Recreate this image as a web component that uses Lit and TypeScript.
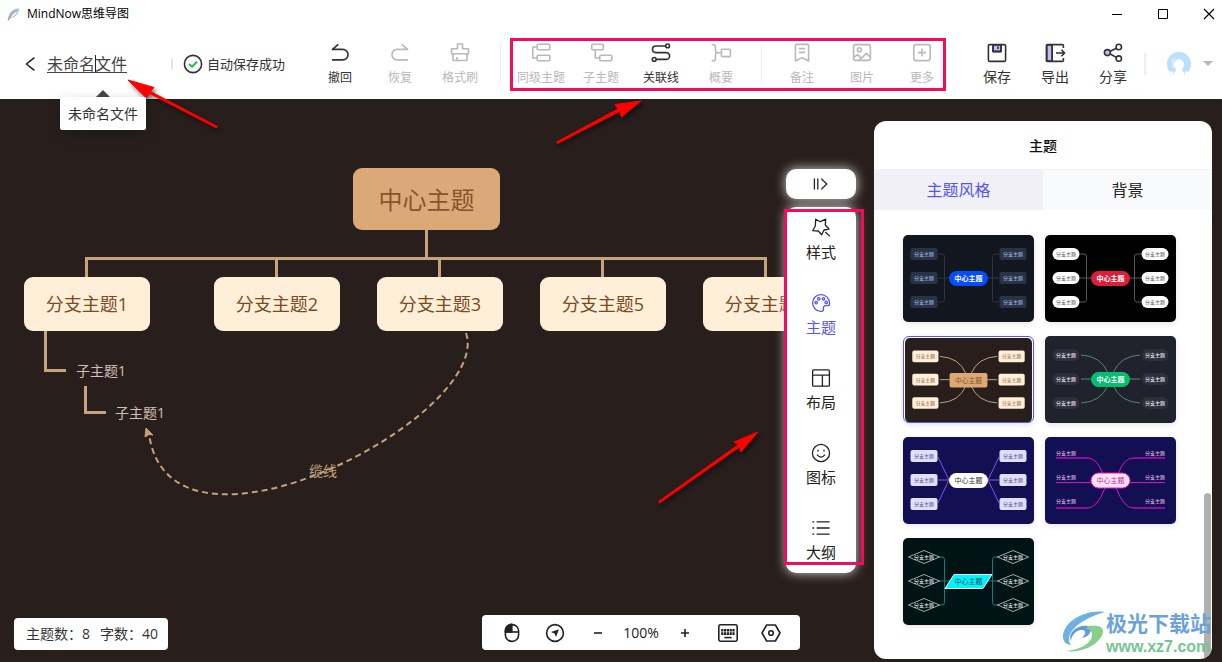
import { LitElement, html, css, svg, nothing } from "lit";
import { customElement, property, state } from "lit/decorators.js";
import { classMap } from "lit/directives/class-map.js";

const icons: Record<string, unknown> = {
  undo: svg`<path d="M8.3 1.4 2.4 6.4H12.8a5.2 5.2 0 0 1 0 10.5H2"/>`,
  redo: svg`<path d="M11.7 1.4 17.6 6.4H7.2a5.2 5.2 0 0 0 0 10.5H18"/>`,
  brush: svg`<path d="M7.5 5.7V1h5v4.7h5.9v5H1.6v-5zM3 10.7v6.8h14v-6.8M7 14v3.5"/>`,
  sibling: svg`<rect x="6.2" y="1.2" width="12.6" height="5.6" rx="1"/><rect x="6.2" y="12.2" width="12.6" height="5.6" rx="1"/><path d="M6.2 4H1.8v11h4.4"/>`,
  child: svg`<rect x=".8" y="1.2" width="11.6" height="5.6" rx="1"/><rect x="8.8" y="12.2" width="12" height="5.6" rx="1"/><path d="M4.2 6.8V15h4.6"/>`,
  relation: svg`<circle cx="16.6" cy="2.9" r="1.9"/><circle cx="3.2" cy="16.4" r="1.9"/><path d="M14.6 3H4.8a3.3 3.3 0 0 0 0 6.6H15.2a3.4 3.4 0 0 1 0 6.8H5.2"/>`,
  summary: svg`<path d="M.6 1.8h1.8q2 0 2 2v3.6q0 2 2 2.4-2 .4-2 2.4v3.6q0 2-2 2H.6M6.4 9.8H10"/><rect x="10.4" y="6.2" width="9" height="7.4" rx="1"/>`,
  note: svg`<path d="M3.4 2.4q0-1 1-1h11.2q1 0 1 1V18L10 14.6 3.4 18zM6.8 5.6h6.4M6.8 9.4h6.4"/>`,
  picture: svg`<rect x="1.6" y="1.6" width="16.8" height="15.8" rx="1.6"/><circle cx="7.4" cy="6.8" r="2"/><path d="m1.8 14.4 3.8-2.8 3.8 3.8 5-5 4 3.8M9.4 15.4l-2 2"/>`,
  more: svg`<rect x="1.8" y="1.6" width="16.4" height="16" rx="2"/><path d="M10 5.6v8M6 9.6h8"/>`,
  save: svg`<rect x="6" y="2" width="8" height="6.4" fill="#bdbdfa"/><rect x="1.4" y="1.6" width="17.2" height="16.8" rx="1.4"/><path d="M6 1.8v6.8h8V1.8M11 3.6v2.4"/>`,
  export: svg`<rect x="1.8" y="2" width="5.4" height="16" fill="#bdbdfa"/><path d="M18.4 5V2.6q0-1-1-1h-15q-1 0-1 1v14.8q0 1 1 1h15q1 0 1-1V15M7.2 1.6v16.8M11 10h8.6M16.4 6.8l3.2 3.2-3.2 3.2"/>`,
  share: svg`<circle cx="4.4" cy="9.6" r="3" fill="#bdbdfa"/><circle cx="15.8" cy="4" r="2.7"/><circle cx="15.8" cy="15.6" r="2.7"/><path d="m7.2 8.2 6.2-3M7.2 11l6.2 3.4"/>`,
  style: svg`<path d="M4.7 1.2 9.300 3.700l5.400-2.500-.4 5.800 3.700 4-5 1-2.300 4.800-3.400-3.800-5.600-.3L4.300 8zM14.300 14l4.600 4.400"/>`,
  theme: svg`<path d="M18.600 10.400c0-5-3.800-8.800-8.600-8.800S1.600 5.300 1.600 10c0 4.400 3.300 8.300 8 8.300H11c1.400-.3 1.600-1.300 1.400-2.800-.2-2 .8-2.900 2.600-2.900h1.600c1.300 0 2-.8 2-2.200z"/><circle cx="5.200" cy="9.600" r="1.200"/><circle cx="7.800" cy="5.800" r="1.200"/><circle cx="12.400" cy="5.800" r="1.200"/><circle cx="15.200" cy="9.400" r="1.200"/>`,
  layout: svg`<rect x="1.600" y="1.800" width="16.800" height="16.400" rx="1"/><path d="M1.600 7.200h16.800M11.400 7.200v11"/>`,
  smile: svg`<circle cx="10" cy="10" r="8.600"/><path d="M6 11.600q4 5 8 0M7 6.800v1.600M13 6.800v1.600"/>`,
  outline: svg`<path d="M5.600 3.800h13M5.600 10h13M5.600 16.200h13M1.400 3.800h1.800M1.400 10h1.800M1.400 16.200h1.800"/>`,
  collapse: svg`<path d="M3.400 4.400v11.200M6.800 4.400v11.200M10.200 4.600l5.600 5.400-5.600 5.400"/>`,
  mouse: svg`<path d="M3.400 9V7.400a6.400 6 0 0 1 6.400-6V9z" fill="currentColor"/><rect x="3.400" y="1.600" width="13.200" height="16.800" rx="6.400"/><path d="M3.400 9h13.200"/>`,
  locate: svg`<circle cx="10" cy="10" r="8.400"/><path d="m14 6.200-3 7.800-1.400-3.600L6 9z" fill="currentColor" stroke="none"/>`,
  minus: svg`<path d="M6 10h8"/>`,
  plus: svg`<path d="M6 10h8M10 6v8"/>`,
  keyboard: svg`<rect x=".8" y="1.800" width="18.400" height="16.400" rx="1.600"/><path d="M3.200 7.200h13.600M3.200 10.600h13.600" stroke-width="2.600" stroke-dasharray="2.200 .6"/><path d="M6.400 14.600h7.200"/>`,
  hexagon: svg`<path d="M5.600 2h8.800l4.600 8-4.600 8H5.600L1 10z"/><circle cx="10" cy="10" r="2.300"/>`,
  check: svg`<circle cx="10" cy="10" r="8.600"/><path d="m6 10 3 2.800 5-5" stroke="#1fbf4c" stroke-width="2"/>`,
  back: svg`<path d="M14.400 3.600 6.400 10l8 6.400"/>`,
  min: svg`<path d="M5 10.500h10" stroke-width="1"/>`,
  max: svg`<path d="M5.500 5.500h9v9h-9z" stroke-width="1"/>`,
  close: svg`<path d="m5 5 10 10M15 5 5 15" stroke-width="1.200"/>`,
};

@customElement("mn-icon")
export class MnIcon extends LitElement {
  @property() name = "";
  static styles = css`
    :host { display: block; width: 20px; height: 20px; }
    .glyph { display: block; width: 100%; height: 100%; overflow: visible; stroke-width: var(--icon-weight, 1.6); }
  `;
  render() {
    return html`<svg class="glyph" viewBox="0 0 20 20" fill="none" stroke="currentColor"
      stroke-linejoin="round" aria-hidden="true">${icons[this.name]}</svg>`;
  }
}

interface Theme {
  id: string;
  bg: string;
  line: string;
  link: "bracket" | "curve" | "straight" | "rail";
  shape: "box" | "pill" | "diamond" | "underline";
  node: string;
  ink: string;
  core: string;
  coreInk: string;
  bold?: boolean;
}

const themes: Theme[] = [
  { id: "星夜", bg: "#12171f", line: "#2d3545", link: "bracket", shape: "box", node: "#2a3346", ink: "#a9c2ea", core: "#0a4cf5", coreInk: "#fff", bold: true },
  { id: "黑红", bg: "#000", line: "#58595c", link: "bracket", shape: "pill", node: "#fff", ink: "#555", core: "#da2038", coreInk: "#fff", bold: true },
  { id: "暖棕", bg: "#281f1d", line: "#c4a37d", link: "curve", shape: "box", node: "#ffeed8", ink: "#8a623f", core: "#dba977", coreInk: "#8a522c" },
  { id: "墨绿", bg: "#20222c", line: "#4f8a70", link: "curve", shape: "pill", node: "#2e303d", ink: "#fff", core: "#07bd70", coreInk: "#fff", bold: true },
  { id: "靛紫", bg: "#121052", line: "#7358e8", link: "straight", shape: "box", node: "#e0deff", ink: "#55507e", core: "#fff", coreInk: "#33333d" },
  { id: "霓虹", bg: "#121052", line: "#d80fc0", link: "rail", shape: "underline", node: "#8d0f9a", ink: "#f6c6f3", core: "#fbe4f8", coreInk: "#c22ba8" },
  { id: "青光", bg: "#001415", line: "#0b8084", link: "bracket", shape: "diamond", node: "#c8d0d0", ink: "#fff", core: "#00f2fa", coreInk: "#0b5457" },
];

const rows = [19, 43, 67];

@customElement("theme-preview")
export class ThemePreview extends LitElement {
  @property({ attribute: false }) theme!: Theme;
  static styles = css`
    :host { display: block; }
    .map { display: block; width: 100%; }
    text { font-family: "Noto Sans CJK SC", sans-serif; text-anchor: middle; }
    .leaf { font-size: 5px; }
    .core { font-size: 7px; }
    .core.bold { font-weight: 700; }
  `;

  private links(t: Theme) {
    const paths = {
      bracket: "M35 19h4q2.500 0 2.500 2.500v43q0 2.500-2.500 2.500h-4M35 43h61M96 19h-4q-2.500 0-2.500 2.500v43q0 2.500 2.500 2.500h4",
      curve: "M36 19q20 1 27 18M36 67q20-1 27-18M95 19q-20 1-27 18M95 67q-20-1-27-18M36 43h59",
      straight: "M35 20 46 43 35 66M96 20 85 43l11 23M35 43h61",
      rail: "M43 21q9 0 15 16M88 21q-9 0-15 16M43 71q9 0 17-20M88 71q-9 0-17-20M11 45.500h109",
    };
    return svg`<path d=${paths[t.link]} fill="none" stroke=${t.line} />`;
  }

  private leaf(t: Theme, x: number, y: number) {
    const shape = {
      box: svg`<rect x=${x - 13.5} y=${y - 6} width="27" height="12" rx="2" fill=${t.node} />`,
      pill: svg`<rect x=${x - 13.5} y=${y - 6} width="27" height="12" rx="6" fill=${t.node} />`,
      diamond: svg`<path d="M${x - 15.5} ${y}L${x} ${y - 6.5}L${x + 15.5} ${y}L${x} ${y + 6.5}Z" fill=${t.bg} stroke=${t.node} stroke-width=".8" />`,
      underline: y === 43 ? nothing : svg`<path d="M${x < 60 ? 11 : 88} ${y === 19 ? 21 : 71}h32" stroke=${t.node} stroke-width="2" />`,
    }[t.shape];
    const lift = t.shape === "underline" ? 1 : -2;
    return svg`${shape}<text class="leaf" x=${x} y=${y - lift} fill=${t.ink}>分支主题</text>`;
  }

  private core(t: Theme) {
    if (t.shape === "diamond")
      return svg`<path d="M51 36.500h38L80 50.500H42z" fill=${t.core} stroke="#dff" />`;
    const radius = t.id === "暖棕" ? 2 : 7.5;
    return svg`<rect x="46" y="36" width="39" height="15" rx=${radius} fill=${t.core}
      stroke=${t.shape === "underline" ? "#f20fcb" : "none"} />`;
  }

  render() {
    const t = this.theme;
    return html`<svg class="map" viewBox="0 0 131 87" role="img" aria-label=${t.id}>
      <rect width="131" height="87" rx="5" fill=${t.bg}></rect>
      ${this.links(t)}
      ${rows.map((y) => [this.leaf(t, 21, y), this.leaf(t, 110, y)])}
      ${this.core(t)}
      <text class=${t.bold ? "core bold" : "core"} x="65.500" y="46" fill=${t.coreInk}>中心主题</text>
    </svg>`;
  }
}

interface Tool { icon: string; label: string; off?: boolean }

const toolGroups: Tool[][] = [
  [{ icon: "undo", label: "撤回" }, { icon: "redo", label: "恢复", off: true }, { icon: "brush", label: "格式刷", off: true }],
  [
    { icon: "sibling", label: "同级主题", off: true }, { icon: "child", label: "子主题", off: true },
    { icon: "relation", label: "关联线" }, { icon: "summary", label: "概要", off: true },
  ],
  [{ icon: "note", label: "备注", off: true }, { icon: "picture", label: "图片", off: true }, { icon: "more", label: "更多", off: true }],
];

const fileActions: Tool[] = [
  { icon: "save", label: "保存" }, { icon: "export", label: "导出" }, { icon: "share", label: "分享" },
];

const railItems: Tool[] = [
  { icon: "style", label: "样式" }, { icon: "theme", label: "主题" }, { icon: "layout", label: "布局" },
  { icon: "smile", label: "图标" }, { icon: "outline", label: "大纲" },
];

const nodes = [
  { text: "中心主题", kind: "root", x: 353, y: 69 },
  { text: "分支主题1", kind: "branch", x: 24, y: 178 },
  { text: "分支主题2", kind: "branch", x: 214, y: 178 },
  { text: "分支主题3", kind: "branch", x: 377, y: 178 },
  { text: "分支主题5", kind: "branch", x: 540, y: 178 },
  { text: "分支主题4", kind: "branch", x: 703, y: 178 },
  { text: "子主题1", kind: "leaf", x: 76, y: 262 },
  { text: "子主题1", kind: "leaf", x: 115, y: 304 },
  { text: "缆线", kind: "cable", x: 309, y: 361 },
];

@customElement("app-root")
export class AppRoot extends LitElement {
  @state() private selected = "暖棕";
  @state() private section = "主题";

  static styles = css`
    :host {
      display: flex; flex-direction: column; position: relative; min-height: 100vh;
      overflow: hidden; background: #fff; color: #222;
      font-family: "Noto Sans CJK SC", sans-serif; font-size: 14px; line-height: 20px;
    }
    * { box-sizing: border-box; }
    button { border: 0; padding: 0; background: none; color: inherit; font: inherit; cursor: pointer; }
    .titlebar { display: flex; align-items: center; height: 28px; padding-left: 7px; font-size: 12px; color: #000; }
    .brand { display: flex; align-items: center; gap: 7px; font-family: "Open Sans", "Noto Sans CJK SC", sans-serif; }
    .feather { display: block; width: 13px; height: 13px; }
    .controls { display: flex; gap: 20px; margin-left: auto; }
    .control { display: flex; justify-content: center; width: 26px; }
    .toolbar { display: flex; align-items: center; height: 71px; }
    .file { display: flex; align-items: center; flex: 0 0 310px; padding-left: 20px; }
    .back { width: 20px; margin-right: 7px; }
    .name { position: relative; }
    .field {
      display: block; width: 80px; height: 18px; border: 0; border-bottom: 1px solid #444; padding: 0;
      background: none; color: #444; font: inherit; font-size: 16px; line-height: 16px; outline: 0;
    }
    .caret { position: absolute; left: 48px; top: 0; width: 1px; height: 17px; background: #222; }
    .tip {
      position: absolute; z-index: 3; top: 42px; left: 13px; padding: 6px 8px 7px; border-radius: 2px;
      background: #fff; color: #333; white-space: nowrap; box-shadow: 0 4px 14px rgba(0, 0, 0, 0.2);
    }
    .tip::before {
      content: ""; position: absolute; left: 36px; top: -7px;
      border: 7px solid transparent; border-top: 0; border-bottom-color: #444;
    }
    .saved {
      display: flex; align-items: center; gap: 4px; margin-left: 44px; padding-left: 12px;
      font-size: 13px; color: #333; white-space: nowrap; position: relative;
    }
    .saved::before { content: ""; position: absolute; left: 0; width: 2px; height: 12px; background: #e7e7f3; }
    .tools, .group { display: flex; align-items: center; }
    .group + .group::before { content: ""; width: 1px; height: 40px; margin: 0 10px; background: #eee; }
    .tool { display: flex; flex-direction: column; align-items: center; gap: 6px; width: 60px; font-size: 12px; line-height: 16px; color: #333; }
    .tool:disabled { color: #b9b9b9; cursor: default; }
    .actions { display: flex; align-items: center; margin-left: auto; padding-right: 9px; }
    .action { width: 58px; gap: 5px; font-size: 14px; }
    .rule { width: 2px; height: 22px; margin-left: 2px; background: #eceef0; }
    .user { display: flex; align-items: center; gap: 12px; margin-left: 21px; }
    .avatar { display: block; width: 24px; height: 24px; }
    .drop { border: 5px solid transparent; border-top-color: #b8b8b8; border-bottom: 0; }

    .workspace { position: relative; display: flex; flex: 1; background: #281f1d; }
    .board { position: absolute; inset: 0; overflow: hidden; }
    .wires { position: absolute; left: 0; top: 0; overflow: visible; }
    .node { position: absolute; display: flex; align-items: center; justify-content: center; white-space: nowrap; }
    .root { width: 147px; height: 62px; border-radius: 9px; background: #dba977; color: #8a522c; font-size: 24px; }
    .branch { width: 126px; height: 54px; border-radius: 9px; background: #ffeed8; color: #7a4a20; font-size: 18px; }
    .leaf { color: #d3c0b4; }
    .cable { color: #c4a37d; }
    .branch, .leaf { font-family: "Open Sans", "Noto Sans CJK SC", sans-serif; }

    .stage { position: relative; display: flex; flex: 1; flex-direction: column; justify-content: space-between; min-width: 0; }
    .side { display: flex; flex-direction: column; gap: 8px; width: 70px; margin: 70px 0 0 auto; --icon-weight: 1.3; }
    .side > * { border-radius: 10px; background: #fff; box-shadow: 0 0 12px rgba(255, 255, 255, 0.8); }
    .fold { display: flex; align-items: center; justify-content: center; height: 30px; }
    .rail { display: flex; flex-direction: column; align-items: center; gap: 31px; padding: 11px 0; }
    .item { display: flex; flex-direction: column; align-items: center; gap: 4px; width: 100%; font-size: 15px; }
    .item.on { color: #5656f2; }
    .dock { display: flex; align-items: flex-end; justify-content: space-between; padding: 0 56px 12px 14px; }
    .bar { display: flex; align-items: center; border-radius: 4px; background: #fff; }
    .stats { gap: 10px; height: 32px; padding: 0 10px 0 12px; color: #333; }
    .stats, .zoom { font-family: "Open Sans", "Noto Sans CJK SC", sans-serif; }
    .zoom { height: 35px; padding: 0 8px; }
    .knob { display: flex; justify-content: center; width: 43px; color: #222; }
    .level { width: 44px; text-align: center; }

    .panel {
      position: relative; display: flex; flex-direction: column; flex: 0 0 338px; margin: 22px 10px 3px 18px;
      border-radius: 12px; overflow: hidden; background: #fff;
    }
    .heading { margin: 0; padding: 14px 0; font-size: 14px; font-weight: 500; text-align: center; color: #111; }
    .tabs { display: grid; grid-template-columns: 1fr 1fr; border-top: 1px solid #f0f1f4; }
    .tab { height: 40px; padding-bottom: 2px; background: #f9fafc; font-size: 16px; }
    .tab.on { background: #f0f0f6; color: #5656f2; }
    .themes { display: grid; grid-template-columns: 131px 131px; gap: 14px 11px; padding: 25px 29px; }
    .card { display: block; height: 87px; border-radius: 6px; box-shadow: 0 2px 6px rgba(0, 0, 0, 0.1); }
    .card.on { padding: 1px; border: 1px solid #5656f2; }
    .thumb { position: absolute; right: 1px; bottom: 0; width: 7px; height: 166px; border-radius: 4px 4px 0 0; background: #b0b0b0; }

    .marks { position: absolute; inset: 0; width: 100%; height: 100%; pointer-events: none; }
    .arrow { fill: #f00; stroke: #f00; filter: drop-shadow(2px 3px 2px rgba(0, 0, 0, 0.55)); }
    .frame { fill: none; stroke: #f50a5c; stroke-width: 3; }
    .site { position: absolute; right: 11px; bottom: 6px; display: flex; align-items: center; gap: 1px; pointer-events: none; }
    .swirl { display: block; width: 43px; height: 42px; }
    .words { display: flex; flex-direction: column; white-space: nowrap; }
    .cn { font-size: 21px; font-weight: 700; line-height: 31px; color: #6aa3dc; }
    .url { font-family: "Liberation Sans", sans-serif; font-size: 16px; font-weight: 700; line-height: 18px; color: #74c68f; }
  `;

  private tool(t: Tool, extra = "") {
    return html`<button class="tool ${extra}" ?disabled=${t.off}><mn-icon name=${t.icon}></mn-icon>${t.label}</button>`;
  }

  private knob(icon: string, label: string) {
    return html`<button class="knob" aria-label=${label}><mn-icon name=${icon}></mn-icon></button>`;
  }

  private wires() {
    return html`<svg class="wires" width="856" height="563" fill="none" stroke="#c4a37d" aria-hidden="true">
      <path stroke-width="3" d="M426.500 131v28M86.500 178v-18.500h679V178M276.500 159v19M439.500 159v19M602.500 159v19M45.500 232v39.500H66M85.500 287v26.500H106"/>
      <path stroke-width="2" stroke-dasharray="6 4" d="M466 234C494 316 170 486 149 335"/>
      <path d="m146 329-1 9 4-2.500 4 .5z" fill="#c4a37d"/>
    </svg>`;
  }

  render() {
    return html`
      <header class="titlebar">
        <div class="brand">
          <svg class="feather" viewBox="0 0 13 13" aria-hidden="true">
            <path d="M1 12C1 6 5 1 12 .6 11.600 5 9 9 4 10" fill="#7cc4fb"/>
            <path d="M3.500 9.500C5 6 7 3.500 10.500 2 10 5.500 7.500 8.500 3.500 9.500" fill="#fff3ea"/>
            <path d="M1 12.500C3 8 6 4.500 10 3" fill="none" stroke="#fa8a4f" stroke-width="1.200"/>
          </svg>
          <span>MindNow思维导图</span>
        </div>
        <div class="controls">
          <button class="control" aria-label="最小化"><mn-icon name="min"></mn-icon></button>
          <button class="control" aria-label="最大化"><mn-icon name="max"></mn-icon></button>
          <button class="control" aria-label="关闭"><mn-icon name="close"></mn-icon></button>
        </div>
      </header>

      <div class="toolbar">
        <div class="file">
          <button class="back" aria-label="返回"><mn-icon name="back"></mn-icon></button>
          <div class="name">
            <input class="field" aria-label="文件名" .value=${"未命名文件"} />
            <span class="caret"></span>
            <div class="tip" role="tooltip">未命名文件</div>
          </div>
          <div class="saved"><mn-icon name="check"></mn-icon>自动保存成功</div>
        </div>
        <nav class="tools">
          ${toolGroups.map((g) => html`<div class="group">${g.map((t) => this.tool(t))}</div>`)}
        </nav>
        <div class="actions">
          ${fileActions.map((t) => this.tool(t, "action"))}
          <span class="rule"></span>
          <button class="user" aria-label="账户">
            <svg class="avatar" viewBox="0 0 24 24" aria-hidden="true">
              <circle cx="12" cy="12" r="12" fill="#b9e0ff"/>
              <path d="M6 24c0-4 3-4 3-7-3-2-3-9 3-10 6 1 6 8 3 10 0 3 3 3 3 7z" fill="#fff"/>
              <path d="M0 18q3 3 6 1v5H0zM24 18q-3 3-6 1v5h6z" fill="#fff"/>
              <path d="M5 8q2-3 5-2-3 1-3 5v6q-3-2-2-9" fill="#d8eeff"/>
            </svg>
            <span class="drop"></span>
          </button>
        </div>
      </div>

      <main class="workspace">
        <div class="board">
          ${this.wires()}
          ${nodes.map((n) => html`<div class="node ${n.kind}" style="left:${n.x}px;top:${n.y}px">${n.text}</div>`)}
        </div>
        <div class="stage">
          <div class="side">
            <button class="fold" aria-label="收起"><mn-icon name="collapse"></mn-icon></button>
            <nav class="rail">
              ${railItems.map((r) => html`<button class=${classMap({ item: true, on: r.label === this.section })}
                @click=${() => (this.section = r.label)}><mn-icon name=${r.icon}></mn-icon>${r.label}</button>`)}
            </nav>
          </div>
          <div class="dock">
            <div class="bar stats"><span>主题数：8</span><span>字数：40</span></div>
            <div class="bar zoom">
              ${this.knob("mouse", "鼠标")}${this.knob("locate", "定位")}${this.knob("minus", "缩小")}
              <span class="level">100%</span>
              ${this.knob("plus", "放大")}${this.knob("keyboard", "快捷键")}${this.knob("hexagon", "设置")}
            </div>
          </div>
        </div>
        <aside class="panel">
          <h2 class="heading">主题</h2>
          <div class="tabs" role="tablist">
            <button class="tab on" role="tab" aria-selected="true">主题风格</button>
            <button class="tab" role="tab" aria-selected="false">背景</button>
          </div>
          <div class="themes">
            ${themes.map((t) => html`<button class=${classMap({ card: true, on: t.id === this.selected })}
              aria-pressed=${t.id === this.selected} @click=${() => (this.selected = t.id)}>
              <theme-preview .theme=${t}></theme-preview></button>`)}
          </div>
          <span class="thumb"></span>
        </aside>
      </main>

      <div class="site">
        <svg class="swirl" viewBox="0 0 43 42" aria-hidden="true">
          <path d="M43 1C24-2 2 10 1 25c-.4 6 4 9 8 9C3 27 9 11 43 1" fill="#6fb0e2"/>
          <path d="M9 30c-4-9 8-17 17-15 6 2 2 11-6 12 4-4 4-7 1-8-6-1-12 5-12 11" fill="#5f9bd8"/>
          <path d="M26 15c9-1 14 0 15 4 1 11-18 24-37 21 14-1 26-8 26-16 0-4-2-6-6-6z" fill="#86cf8c"/>
        </svg>
        <div class="words"><span class="cn">极光下载站</span><span class="url">www.xz7.com</span></div>
      </div>

      <svg class="marks" aria-hidden="true">
        <rect class="frame" x="511.500" y="39.500" width="433" height="50"/>
        <rect class="frame" x="785.500" y="210.500" width="77" height="353"/>
        <path class="arrow" d="M128 80l26 7.500-3.500 4L217.500 126.500l-1 1.500L149.500 93.500l-3 4.500z"/>
        <path class="arrow" d="M641 101l-26 3.500 3 4.500L556.500 142l1 1.500L619.500 111.500l2 5.500z"/>
        <path class="arrow" d="M758 432l-24 10 4.500 2.500L658.500 501.500l1 1.500L739.500 447l1.500 5z"/>
      </svg>
    `;
  }
}
